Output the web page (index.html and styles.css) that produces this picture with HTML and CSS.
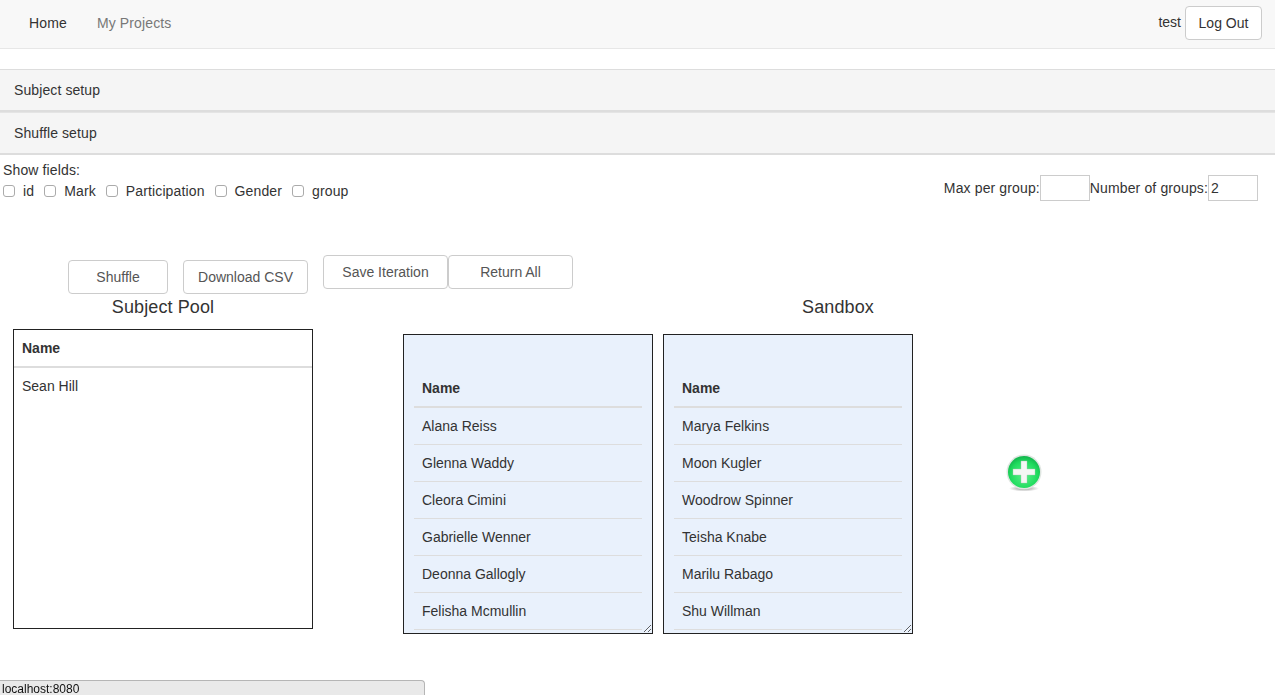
FILE: index.html
```html
<!DOCTYPE html>
<html>
	<head>
		<meta charset="utf-8">
		<meta name="viewport" content="width=device-width">
		<title>Shuffle</title>
		<link rel="stylesheet" href="styles.css">
	</head>
	<body>
		<nav class="navbar">
			<ul class="nav_links">
				<li><a class="nav_active" href="#">Home</a></li>
				<li><a href="#">My Projects</a></li>
			</ul>
			<div class="nav_user">
				<span class="nav_name">test</span>
				<button class="btn btn_logout">Log Out</button>
			</div>
		</nav>

		<div class="panel panel_first">Subject setup</div>
		<div class="panel panel_second">Shuffle setup</div>

		<div class="options">
			<div class="fields">
				<div>Show fields:</div>
				<div class="field_list">
					<label><input type="checkbox">id</label>
					<label><input type="checkbox">Mark</label>
					<label><input type="checkbox">Participation</label>
					<label><input type="checkbox">Gender</label>
					<label><input type="checkbox">group</label>
				</div>
			</div>
			<div class="group_inputs">
				<label>Max per group:<input type="text"></label>
				<label>Number of groups:<input type="text" value="2"></label>
			</div>
		</div>

		<div class="toolbar">
			<button class="btn btn_shuffle">Shuffle</button>
			<button class="btn btn_csv">Download CSV</button>
			<div class="toolbar_raised">
				<button class="btn btn_wide">Save Iteration</button>
				<button class="btn btn_wide">Return All</button>
			</div>
		</div>

		<div class="workspace">
			<section class="pool">
				<h3>Subject Pool</h3>
				<div class="pool_box">
					<table>
						<thead><tr><th>Name</th></tr></thead>
						<tbody><tr><td>Sean Hill</td></tr></tbody>
					</table>
				</div>
			</section>

			<section class="sandbox">
				<h3>Sandbox</h3>
				<div class="groups">
					<div class="group_box">
						<table>
							<thead><tr><th>Name</th></tr></thead>
							<tbody>
								<tr><td>Alana Reiss</td></tr>
								<tr><td>Glenna Waddy</td></tr>
								<tr><td>Cleora Cimini</td></tr>
								<tr><td>Gabrielle Wenner</td></tr>
								<tr><td>Deonna Gallogly</td></tr>
								<tr><td>Felisha Mcmullin</td></tr>
							</tbody>
						</table>
					</div>
					<div class="group_box">
						<table>
							<thead><tr><th>Name</th></tr></thead>
							<tbody>
								<tr><td>Marya Felkins</td></tr>
								<tr><td>Moon Kugler</td></tr>
								<tr><td>Woodrow Spinner</td></tr>
								<tr><td>Teisha Knabe</td></tr>
								<tr><td>Marilu Rabago</td></tr>
								<tr><td>Shu Willman</td></tr>
							</tbody>
						</table>
					</div>
					<svg class="add_group" width="38" height="40" viewBox="0 0 38 40">
						<defs>
							<radialGradient id="add_fill" cx="50%" cy="60%" r="60%">
								<stop offset="0" stop-color="#5cf08a"/>
								<stop offset="0.7" stop-color="#20dc5e"/>
								<stop offset="1" stop-color="#12b44c"/>
							</radialGradient>
							<radialGradient id="add_shadow" cx="50%" cy="50%" r="50%">
								<stop offset="0" stop-color="#666" stop-opacity="0.8"/>
								<stop offset="1" stop-color="#777" stop-opacity="0"/>
							</radialGradient>
						</defs>
						<ellipse cx="19" cy="35.500" rx="15" ry="3" fill="url(#add_shadow)"/>
						<circle cx="19" cy="19" r="17.500" fill="#dfe6e1"/>
						<circle cx="19" cy="19" r="16" fill="url(#add_fill)"/>
						<path d="M16 8h6v8h8v6h-8v8h-6v-8H8v-6h8z" fill="#f4f7f4" stroke="#a9c4b0" stroke-width="0.4"/>
					</svg>
				</div>
			</section>
		</div>

		<div class="status_bar">localhost:8080</div>
	</body>
</html>
```

FILE: styles.css
```css
*{
	box-sizing:border-box;
}

body{
	margin:0;
	background:#FFF;
	color:#333;
	font-size:14px;
	line-height:20px;
	font-family:"Liberation Sans",Arial,sans-serif;
}

button,input{
	font-family:inherit;
}

a{
	text-decoration:none;
}

/* top bar */
.navbar{
	display:flex;
	justify-content:space-between;
	height:49px;
	padding:0 13px 0 14px;
	background:#F8F8F8;
	border-bottom:1px solid #E7E7E7;
}

.nav_links{
	display:flex;
	margin:0;
	padding:0;
	list-style:none;
}

.nav_links a{
	display:block;
	padding:13px 15px;
	color:#777;
	letter-spacing:0.13px;
}

.nav_links a.nav_active{
	color:#333;
}

.nav_user{
	display:flex;
	align-items:flex-start;
	gap:4px;
	padding-top:6px;
}

.nav_name{
	padding-top:6px;
}

.btn{
	height:34px;
	padding:0;
	background:#FFF;
	border:1px solid #CCC;
	border-radius:4px;
	color:#333;
	font-size:14px;
}

.btn_logout{
	width:77px;
}

/* collapsed panels */
.panel{
	height:43px;
	padding:10px 14px;
	background:#F5F5F5;
	border-bottom:2px solid #DDD;
	letter-spacing:0.1px;
}

.panel_first{
	margin-top:20px;
	border-top:1px solid #DDD;
}

.panel_second{
	border-top:1px solid #E4E4E4;
}

/* field options */
.options{
	display:flex;
	justify-content:space-between;
	height:100px;
	padding:5px 17px 0 3px;
	letter-spacing:0.13px;
}

.field_list{
	display:flex;
	gap:10px;
	margin-top:1px;
}

.field_list label{
	display:flex;
	align-items:center;
	gap:8px;
}

.field_list input{
	appearance:none;
	width:12px;
	height:12px;
	margin:0;
	background:#FFF;
	border:1px solid #ABABAB;
	border-radius:3px;
}

.group_inputs{
	display:flex;
	padding-top:15px;
}

.group_inputs input{
	width:50px;
	height:26px;
	padding:0 2px;
	border:1px solid #CCC;
	font-size:14px;
	color:#333;
}

/* buttons */
.toolbar{
	display:flex;
	align-items:flex-start;
	padding:5px 0 0 68px;
	height:39px;
}

.toolbar .btn{
	color:#555;
}

.btn_shuffle{
	width:100px;
}

.btn_csv{
	width:125px;
	margin-left:15px;
}

.toolbar_raised{
	display:flex;
	margin:-5px 0 0 15px;
}

.btn_wide{
	width:125px;
}

/* tables */
.workspace{
	display:flex;
	align-items:flex-start;
	padding-left:13px;
}

h3{
	margin:0;
	font-size:18px;
	font-weight:normal;
	line-height:26px;
	text-align:center;
	letter-spacing:0.1px;
}

.pool{
	width:300px;
	margin-right:90px;
}

.pool_box{
	width:300px;
	height:300px;
	margin-top:9px;
	border:1px solid #222;
}

.sandbox{
	width:870px;
}

.groups{
	position:relative;
	display:flex;
	gap:10px;
	margin-top:14px;
}

.group_box{
	flex:none;
	width:250px;
	height:300px;
	padding:35px 10px 0;
	overflow:hidden;
	resize:both;
	background:#E9F1FC;
	border:1px solid #222;
}

table{
	width:100%;
	border-collapse:collapse;
}

th,td{
	padding:8px;
	text-align:left;
}

th{
	border-bottom:2px solid #DDD;
}

td{
	border-bottom:1px solid #DDD;
}

.pool_box td{
	border-bottom:0;
}

/* sits out on its own to the right of the group boxes */
.add_group{
	position:absolute;
	left:602px;
	top:119px;
}

.status_bar{
	position:fixed;
	left:0;
	bottom:0;
	width:425px;
	height:15px;
	padding-left:2px;
	background:#E9E9E9;
	border:1px solid #B5B5B5;
	border-width:1px 1px 0 0;
	border-top-right-radius:4px;
	color:#111;
	font-size:12px;
	line-height:16px;
}
```
